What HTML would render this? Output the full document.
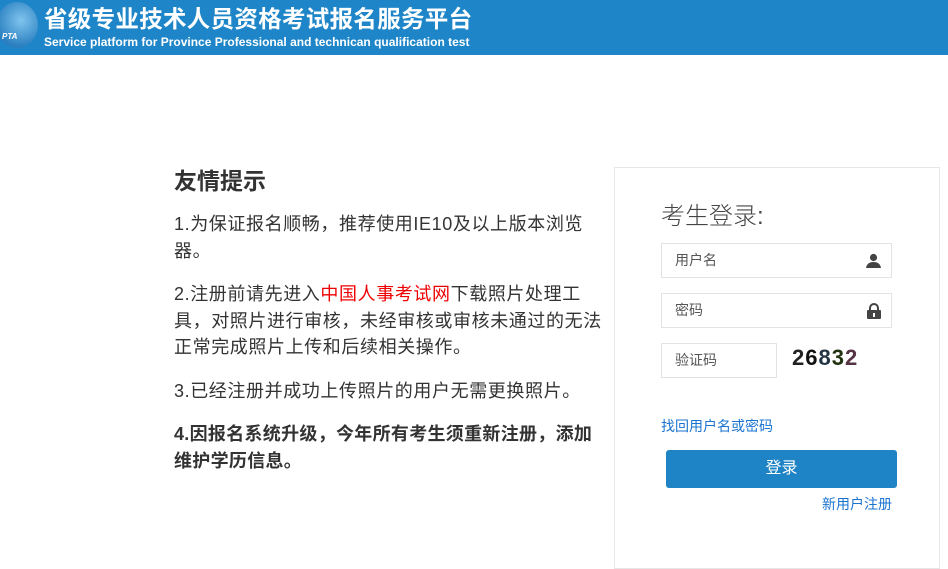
<!DOCTYPE html>
<html><head><meta charset="utf-8"><style>
body{margin:0;width:948px;height:546px;overflow:hidden;background:#fff;font-family:"Liberation Sans","Noto Sans CJK SC",sans-serif;position:relative}
.hd{position:absolute;left:0;top:0;width:948px;height:55px;background:#1e86c8;color:#fff}
.logo{position:absolute;left:-4px;top:2px;width:42px;height:46px;border-radius:50%;background:radial-gradient(circle at 60% 40%,#7fc4ee,#2a7fc0 70%)}
.logo span{position:absolute;left:6px;top:30px;font-size:8px;font-weight:bold;font-style:italic}
.t1{position:absolute;left:44px;top:0px;font-size:23.5px;font-weight:bold;letter-spacing:0.3px}
.t2{position:absolute;left:44px;top:35px;font-size:12px;font-weight:bold}
.left{position:absolute;left:174px;top:166px;width:430px;color:#333}
h2{margin:0 0 15px;font-size:23px;font-weight:bold;line-height:30px}
p{margin:0 0 17px;font-size:18px;line-height:26.5px;letter-spacing:0.6px;white-space:nowrap}
.red{color:#e00}
.box{position:absolute;left:614px;top:167px;width:324px;height:400px;border:1px solid #e6e6e6;background:rgba(255,255,255,.9)}
.lt{position:absolute;left:661px;top:196px;font-size:24px;color:#444;font-weight:300}
.in{position:absolute;left:661px;width:231px;height:35px;border:1px solid #e3e3e3;font-size:14px;color:#555;line-height:33px;box-sizing:border-box;padding-left:13px;background:#fff}
.ic{position:absolute;right:10px;top:9px}
.cap{position:absolute;left:792px;top:345px;font-size:22px;font-weight:bold;letter-spacing:1px}
.lk{position:absolute;color:#1a73d0;font-size:14px}
.btn{position:absolute;left:666px;top:450px;width:231px;height:38px;background:#1e84c6;border-radius:3px;color:#fff;font-size:16px;text-align:center;line-height:38px}
</style></head><body>
<div class="hd"><div class="logo"><span>PTA</span></div>
<div class="t1">省级专业技术人员资格考试报名服务平台</div>
<div class="t2">Service platform for Province Professional and technican qualification test</div></div>
<div class="left">
<h2>友情提示</h2>
<p>1.为保证报名顺畅，推荐使用IE10及以上版本浏览<br>器。</p>
<p>2.注册前请先进入<span class="red">中国人事考试网</span>下载照片处理工<br>具，对照片进行审核，未经审核或审核未通过的无法<br>正常完成照片上传和后续相关操作。</p>
<p>3.已经注册并成功上传照片的用户无需更换照片。</p>
<p style="font-weight:bold;letter-spacing:0.3px">4.因报名系统升级，今年所有考生须重新注册，添加<br>维护学历信息。</p>
</div>
<div class="box"></div>
<div class="lt">考生登录:</div>
<div class="in" style="top:243px">用户名<svg class="ic" width="15" height="15" viewBox="0 0 15 15"><circle cx="7.5" cy="4.5" r="3.6" fill="#444"/><path d="M0 15 Q1 9 7.5 9 Q14 9 15 15Z" fill="#444"/></svg></div>
<div class="in" style="top:293px">密码<svg class="ic" width="14" height="16" viewBox="0 0 14 16"><path d="M3 7V5a4 4 0 0 1 8 0v2" stroke="#444" stroke-width="2" fill="none"/><rect x="0" y="7" width="14" height="9" rx="1" fill="#444"/><rect x="6" y="10" width="2" height="4" fill="#fff"/></svg></div>
<div class="in" style="top:343px;width:116px">验证码</div>
<div class="cap"><span style="color:#222">2</span><span style="color:#111">6</span><span style="color:#234">8</span><span style="color:#231">3</span><span style="color:#534">2</span></div>
<div class="lk" style="left:661px;top:416px">找回用户名或密码</div>
<div class="btn">登录</div>
<div class="lk" style="left:822px;top:494px">新用户注册</div>
</body></html>
